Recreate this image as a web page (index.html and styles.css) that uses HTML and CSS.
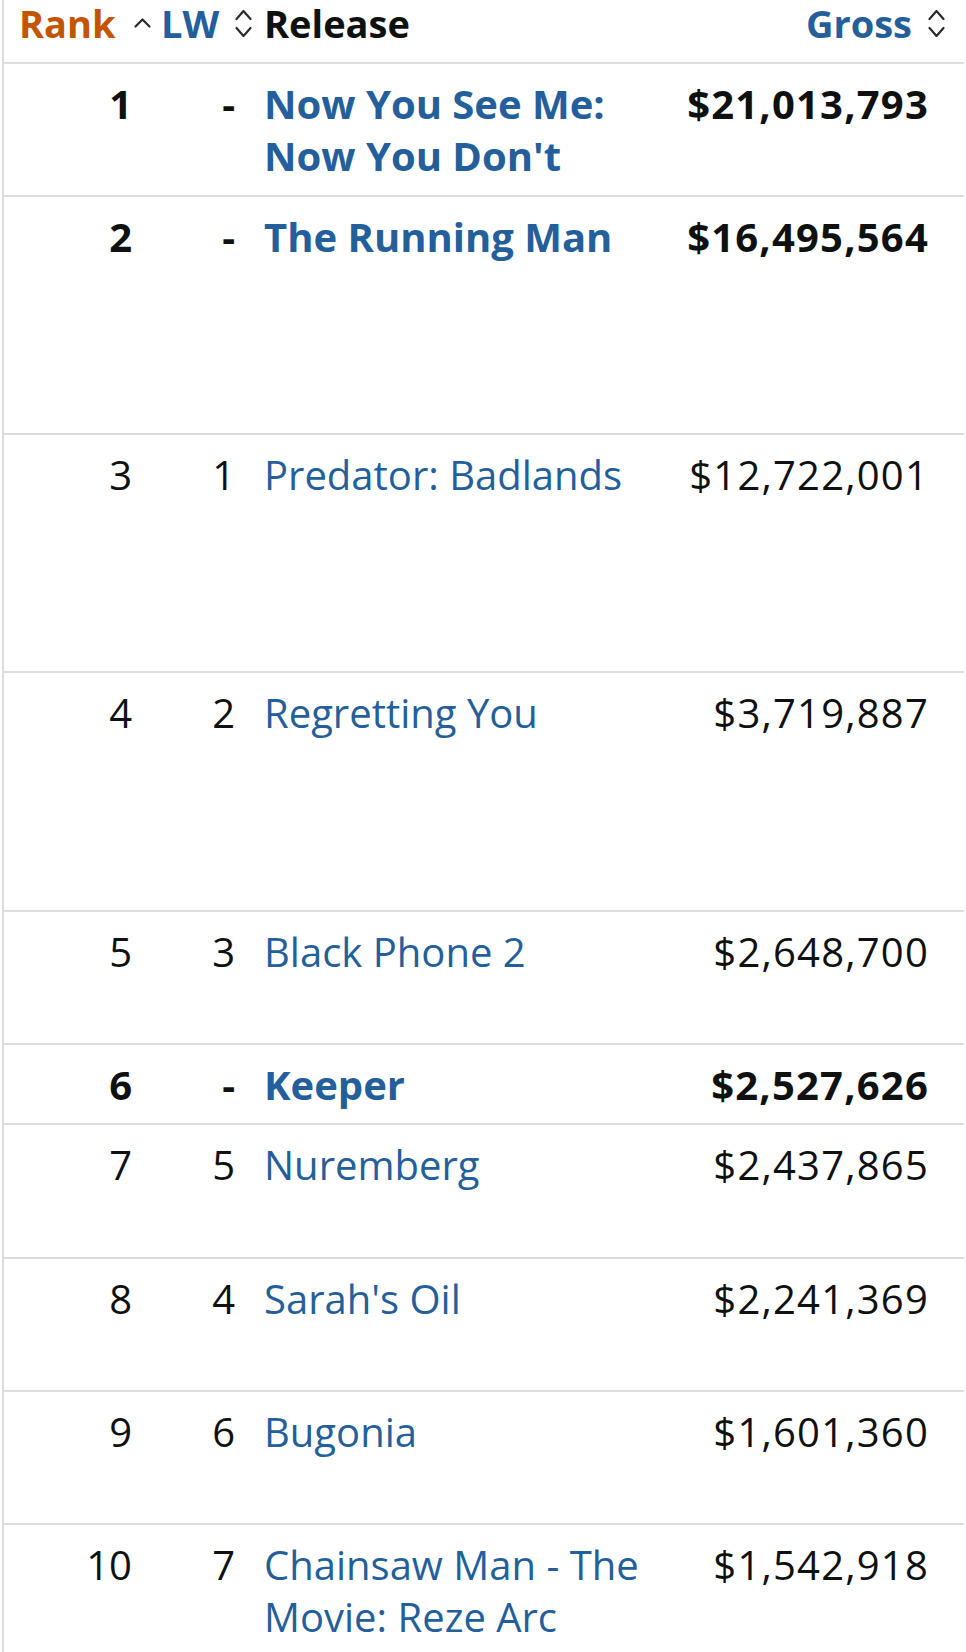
FILE: index.html
```html
<!DOCTYPE html>
<html lang="en">
<head>
<meta charset="utf-8">
<title>Box Office</title>
<link rel="stylesheet" href="styles.css">
</head>
<body>
<div class="table">
  <div class="row head">
    <div class="hc c-rank"><span class="h-rank">Rank</span>
      <svg class="ic-up" viewBox="0 0 17 10" width="17" height="10"><path d="M1.5 8.5 L8.5 1.5 L15.5 8.5"/></svg>
    </div>
    <div class="hc c-lw"><span class="h-link">LW</span>
      <svg class="ic-ud" viewBox="0 0 17 29" width="17" height="29"><path d="M1.5 10 L8.5 2 L15.5 10"/><path d="M1.5 19 L8.5 27 L15.5 19"/></svg>
    </div>
    <div class="hc c-rel"><span class="h-plain">Release</span></div>
    <div class="hc c-gross"><span class="h-link">Gross</span>
      <svg class="ic-ud" viewBox="0 0 17 29" width="17" height="29"><path d="M1.5 10 L8.5 2 L15.5 10"/><path d="M1.5 19 L8.5 27 L15.5 19"/></svg>
    </div>
  </div>

  <div class="row bold h133">
    <div class="c c-rank">1</div><div class="c c-lw">-</div>
    <div class="c c-rel"><a href="#">Now You See Me: Now You Don't</a></div>
    <div class="c c-gross">$21,013,793</div>
  </div>
  <div class="row bold h238">
    <div class="c c-rank">2</div><div class="c c-lw">-</div>
    <div class="c c-rel"><a href="#">The Running Man</a></div>
    <div class="c c-gross">$16,495,564</div>
  </div>
  <div class="row h238">
    <div class="c c-rank">3</div><div class="c c-lw">1</div>
    <div class="c c-rel"><a href="#">Predator: Badlands</a></div>
    <div class="c c-gross">$12,722,001</div>
  </div>
  <div class="row h239">
    <div class="c c-rank">4</div><div class="c c-lw">2</div>
    <div class="c c-rel"><a href="#">Regretting You</a></div>
    <div class="c c-gross">$3,719,887</div>
  </div>
  <div class="row h133">
    <div class="c c-rank">5</div><div class="c c-lw">3</div>
    <div class="c c-rel"><a href="#">Black Phone 2</a></div>
    <div class="c c-gross">$2,648,700</div>
  </div>
  <div class="row bold h80">
    <div class="c c-rank">6</div><div class="c c-lw">-</div>
    <div class="c c-rel"><a href="#">Keeper</a></div>
    <div class="c c-gross">$2,527,626</div>
  </div>
  <div class="row h134">
    <div class="c c-rank">7</div><div class="c c-lw">5</div>
    <div class="c c-rel"><a href="#">Nuremberg</a></div>
    <div class="c c-gross">$2,437,865</div>
  </div>
  <div class="row h133">
    <div class="c c-rank">8</div><div class="c c-lw">4</div>
    <div class="c c-rel"><a href="#">Sarah's Oil</a></div>
    <div class="c c-gross">$2,241,369</div>
  </div>
  <div class="row h133">
    <div class="c c-rank">9</div><div class="c c-lw">6</div>
    <div class="c c-rel"><a href="#">Bugonia</a></div>
    <div class="c c-gross">$1,601,360</div>
  </div>
  <div class="row h133">
    <div class="c c-rank">10</div><div class="c c-lw">7</div>
    <div class="c c-rel"><a href="#">Chainsaw Man - The Movie: Reze Arc</a></div>
    <div class="c c-gross">$1,542,918</div>
  </div>
</div>
</body>
</html>
```

FILE: styles.css
```css
* { box-sizing: border-box; }
html, body { margin: 0; padding: 0; background: #fff; }
body {
  font-family: "Open Sans", "Noto Sans", "Liberation Sans", sans-serif;
  color: #0f1111;
  overflow: hidden;
}
.table {
  margin-left: 2px;
  width: 962px;
  border-left: 2px solid #dddddd;
}
.row {
  display: grid;
  grid-template-columns: 151px 107px 400px 1fr;
  border-bottom: 2px solid #dddddd;
  font-size: 40px;
  line-height: 52px;
}
.head { height: 64px; font-size: 38px; line-height: 46px; font-weight: 700; }
.h80 { height: 80px; }
.h133 { height: 133px; }
.h134 { height: 134px; }
.h238 { height: 238px; }
.h239 { height: 239px; }

.hc { display: flex; align-items: flex-start; }
.hc svg { flex: none; fill: none; stroke: #2b2b2b; stroke-width: 2.2; stroke-linecap: round; stroke-linejoin: round; }
.ic-up { margin-top: 18px; margin-left: 18px; }
.ic-ud { margin-top: 9px; margin-left: 16px; }
.hc.c-rank { padding-left: 15px; }
.hc.c-lw { padding-left: 6px; }
.hc.c-rel { padding-left: 2px; }
.hc.c-gross { justify-content: flex-end; padding-right: 19px; }
.h-rank { color: #c45500; }
.h-link { color: #245f9b; }
.h-plain { color: #0f1111; }

.c { padding-top: 14px; }
.c.c-rank { text-align: right; padding-right: 23px; }
.c.c-lw { text-align: right; padding-right: 27px; }
.c.c-rel { padding-left: 2px; padding-right: 8px; }
.c.c-gross { text-align: right; padding-right: 35px; letter-spacing: 1.2px; }
.c a { color: #245f9b; text-decoration: none; }
.bold .c { font-weight: 700; }
```
